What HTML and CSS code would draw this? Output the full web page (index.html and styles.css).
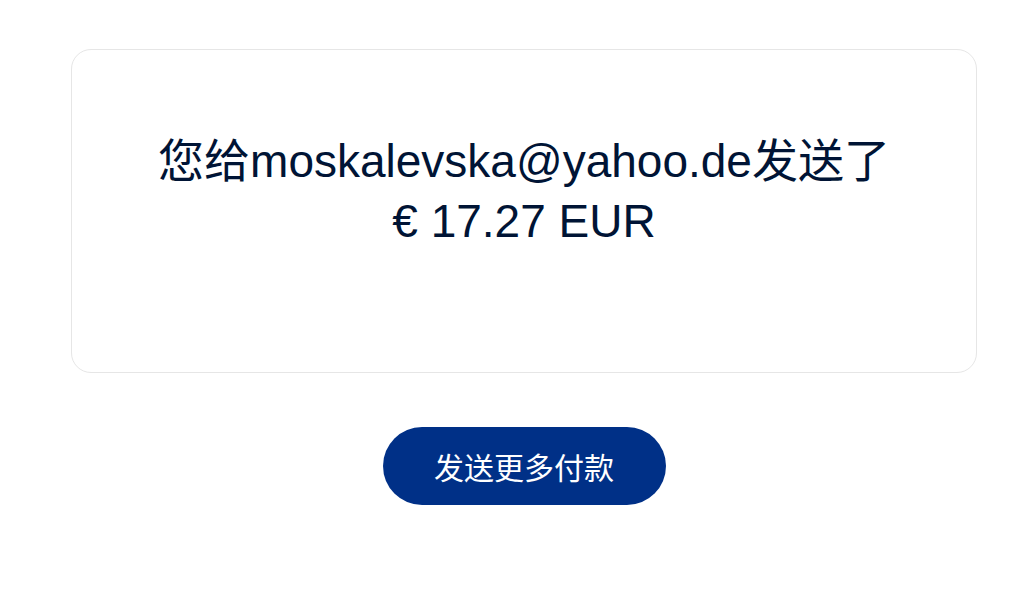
FILE: index.html
```html
<!DOCTYPE html>
<html lang="zh">
<head>
<meta charset="utf-8">
<link rel="stylesheet" href="styles.css">
</head>
<body>
<main class="page">
  <section class="card">
    <p class="message">您给moskalevska@yahoo.de发送了<br>€ 17.27 EUR</p>
  </section>
  <div class="actions">
    <button class="btn-primary" type="button">发送更多付款</button>
  </div>
</main>
</body>
</html>
```
FILE: styles.css
```css
html, body {
  margin: 0;
  padding: 0;
  background: #ffffff;
}
body {
  font-family: "Liberation Sans", Arial, "Noto Sans CJK SC", sans-serif;
  color: #001435;
}
.page {
  padding: 49px 54px 0 71px;
}
.card {
  border: 1px solid #e6e6e6;
  border-radius: 20px;
  padding: 81px 40px 121px;
  text-align: center;
}
.message {
  margin: 0;
  font-size: 46px;
  line-height: 60px;
}
.actions {
  display: flex;
  justify-content: center;
  margin-top: 54px;
}
.btn-primary {
  font-family: "Liberation Sans", Arial, "Noto Sans CJK SC", sans-serif;
  width: 283px;
  height: 78px;
  border: none;
  border-radius: 39px;
  background: #003087;
  color: #ffffff;
  font-size: 30px;
  padding: 0;
  cursor: pointer;
}
```
